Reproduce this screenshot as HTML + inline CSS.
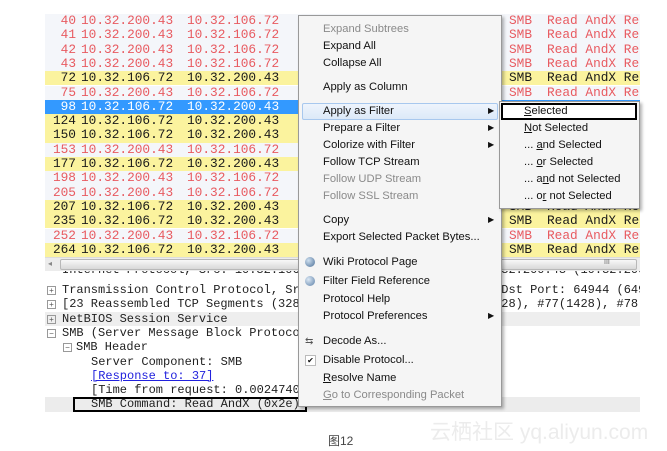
<!DOCTYPE html>
<html><head><meta charset="utf-8"><style>
body{margin:0;width:667px;height:451px;background:#fff;position:relative;overflow:hidden;font-family:"Liberation Mono",monospace}
.r{position:absolute;left:45px;width:595px;height:14.3px;font-size:12.8px;line-height:14.3px;white-space:pre;overflow:hidden}
.req{background:#f4f6fa;color:#e85a60}
.res{background:#fbf39e;color:#1a1a1a}
.sel{background:#3399ff;color:#fff}
.r span{position:absolute;top:0}
.n{left:0;width:31px;text-align:right}
.s{left:36px}.d{left:142px}.p{left:464px}.i{left:502px}
.dt{position:absolute;left:45px;width:595px;height:14.3px;font-size:12px;line-height:14.3px;white-space:pre;color:#222;overflow:hidden}
.dt b{font-weight:normal;position:absolute;top:0}
.pl{position:absolute;left:2px;top:3px;width:7px;height:7px;border:1px solid #999;font-size:8px;line-height:7px;text-align:center;color:#555;font-family:"Liberation Sans",sans-serif}
.menu{position:absolute;left:298px;top:15px;width:202px;height:390px;background:#f5f5f5;border:1px solid #999;box-shadow:2px 2px 3px rgba(0,0,0,.3);font-family:"Liberation Sans",sans-serif;font-size:11.2px;color:#111}
.mi{position:absolute;left:24px;white-space:nowrap}
.g{color:#8a8a8a}
.ar{position:absolute;left:189px;font-size:8px}
.sub{position:absolute;left:499px;top:101px;width:139px;height:106px;background:#f5f5f5;border:1px solid #999;box-shadow:2px 2px 3px rgba(0,0,0,.3);font-family:"Liberation Sans",sans-serif;font-size:11.2px;color:#111}
.si{position:absolute;left:24px;white-space:nowrap}
</style></head><body>

<div class="r req" style="top:14px"><span class="n">40</span><span class="s">10.32.200.43</span><span class="d">10.32.106.72</span><span class="p">SMB</span><span class="i">Read AndX Req</span></div>
<div class="r req" style="top:28.3px"><span class="n">41</span><span class="s">10.32.200.43</span><span class="d">10.32.106.72</span><span class="p">SMB</span><span class="i">Read AndX Req</span></div>
<div class="r req" style="top:42.6px"><span class="n">42</span><span class="s">10.32.200.43</span><span class="d">10.32.106.72</span><span class="p">SMB</span><span class="i">Read AndX Req</span></div>
<div class="r req" style="top:56.9px"><span class="n">43</span><span class="s">10.32.200.43</span><span class="d">10.32.106.72</span><span class="p">SMB</span><span class="i">Read AndX Req</span></div>
<div class="r res" style="top:71.2px"><span class="n">72</span><span class="s">10.32.106.72</span><span class="d">10.32.200.43</span><span class="p">SMB</span><span class="i">Read AndX Res</span></div>
<div class="r req" style="top:85.5px"><span class="n">75</span><span class="s">10.32.200.43</span><span class="d">10.32.106.72</span><span class="p">SMB</span><span class="i">Read AndX Req</span></div>
<div class="r sel" style="top:99.8px"><span class="n">98</span><span class="s">10.32.106.72</span><span class="d">10.32.200.43</span></div>
<div class="r res" style="top:114.1px"><span class="n">124</span><span class="s">10.32.106.72</span><span class="d">10.32.200.43</span></div>
<div class="r res" style="top:128.4px"><span class="n">150</span><span class="s">10.32.106.72</span><span class="d">10.32.200.43</span></div>
<div class="r req" style="top:142.7px"><span class="n">153</span><span class="s">10.32.200.43</span><span class="d">10.32.106.72</span></div>
<div class="r res" style="top:157px"><span class="n">177</span><span class="s">10.32.106.72</span><span class="d">10.32.200.43</span></div>
<div class="r req" style="top:171.3px"><span class="n">198</span><span class="s">10.32.200.43</span><span class="d">10.32.106.72</span></div>
<div class="r req" style="top:185.6px"><span class="n">205</span><span class="s">10.32.200.43</span><span class="d">10.32.106.72</span></div>
<div class="r res" style="top:199.9px"><span class="n">207</span><span class="s">10.32.106.72</span><span class="d">10.32.200.43</span><span class="p">SMB</span><span class="i">Read AndX Res</span></div>
<div class="r res" style="top:214.2px"><span class="n">235</span><span class="s">10.32.106.72</span><span class="d">10.32.200.43</span><span class="p">SMB</span><span class="i">Read AndX Res</span></div>
<div class="r req" style="top:228.5px"><span class="n">252</span><span class="s">10.32.200.43</span><span class="d">10.32.106.72</span><span class="p">SMB</span><span class="i">Read AndX Req</span></div>
<div class="r res" style="top:242.8px"><span class="n">264</span><span class="s">10.32.106.72</span><span class="d">10.32.200.43</span><span class="p">SMB</span><span class="i">Read AndX Res</span></div>

<div style="position:absolute;left:45px;top:257px;width:595px;height:13px;background:#ececec;border-top:1px solid #ddd"></div>
<div style="position:absolute;left:48px;top:259px;font-size:8px;color:#888;font-family:'Liberation Sans',sans-serif">◂</div>
<div style="position:absolute;left:60px;top:259px;width:575px;height:9px;background:linear-gradient(#f8f8f8,#d8d8d8);border:1px solid #b8b8b8;border-radius:2px"></div>
<div style="position:absolute;left:604px;top:259px;font-size:7px;color:#666;font-family:'Liberation Sans',sans-serif">III</div>

<div style="position:absolute;left:45px;top:271px;width:595px;height:6px;overflow:hidden"><div class="dt" style="left:0;top:-8px"><b style="left:17px">Internet Protocol, Src: 10.32.106.72 (10.32.106.72), Dst: 10.32.200.43 (10.32.200.43)</b></div></div>
<div class="dt" style="top:283px"><div class="pl">+</div><b style="left:17px">Transmission Control Protocol, Src Port: microsoft-ds (445), Dst Port: 64944 (64944)</b></div>
<div class="dt" style="top:297.3px"><div class="pl">+</div><b style="left:17px">[23 Reassembled TCP Segments (32839 bytes): #72(1428), #76(1428), #77(1428), #78(</b></div>
<div class="dt" style="top:311.6px;background:#eee"><div class="pl">+</div><b style="left:17px">NetBIOS Session Service</b></div>
<div class="dt" style="top:325.9px"><div class="pl">−</div><b style="left:17px">SMB (Server Message Block Protocol)</b></div>
<div class="dt" style="top:340.2px"><div class="pl" style="left:18px">−</div><b style="left:31px">SMB Header</b></div>
<div class="dt" style="top:354.5px"><b style="left:46px">Server Component: SMB</b></div>
<div class="dt" style="top:368.8px"><b style="left:46px;color:#2222dd;text-decoration:underline">[Response to: 37]</b></div>
<div class="dt" style="top:383.1px"><b style="left:46px">[Time from request: 0.002474000 seconds]</b></div>
<div class="dt" style="top:397.4px;background:#ececec"><b style="left:46px">SMB Command: Read AndX (0x2e)</b></div>
<div style="position:absolute;left:73px;top:397px;width:234px;height:15px;border:2px solid #000;box-sizing:border-box"></div>

<div class="menu">
<div class="mi g" style="top:7px">Expand Subtrees</div>
<div class="mi" style="top:24px">Expand All</div>
<div class="mi" style="top:41px">Collapse All</div>
<div class="mi" style="top:65px">Apply as Column</div>
<div style="position:absolute;left:3px;top:87px;width:196px;height:17px;background:linear-gradient(#eef4fc,#dce9f8);border:1px solid #a8c8ee;border-radius:2px;box-sizing:border-box"></div>
<div class="mi" style="top:89px">Apply as Filter</div><div class="ar" style="top:90px">▶</div>
<div class="mi" style="top:106px">Prepare a Filter</div><div class="ar" style="top:107px">▶</div>
<div class="mi" style="top:123px">Colorize with Filter</div><div class="ar" style="top:124px">▶</div>
<div class="mi" style="top:140px">Follow TCP Stream</div>
<div class="mi g" style="top:157px">Follow UDP Stream</div>
<div class="mi g" style="top:174px">Follow SSL Stream</div>
<div class="mi" style="top:198px">Copy</div><div class="ar" style="top:199px">▶</div>
<div class="mi" style="top:215px">Export Selected Packet Bytes...</div>
<div style="position:absolute;left:6px;top:241px;width:10px;height:10px;border-radius:50%;background:radial-gradient(circle at 35% 35%,#cfe0f0,#4a6e96)"></div>
<div class="mi" style="top:240px">Wiki Protocol Page</div>
<div style="position:absolute;left:6px;top:260px;width:10px;height:10px;border-radius:50%;background:radial-gradient(circle at 35% 35%,#dde9f5,#5a7ea6)"></div>
<div class="mi" style="top:259px">Filter Field Reference</div>
<div class="mi" style="top:277px">Protocol Help</div>
<div class="mi" style="top:294px">Protocol Preferences</div><div class="ar" style="top:295px">▶</div>
<div style="position:absolute;left:6px;top:320px;font-size:10px;color:#555">⇆</div>
<div class="mi" style="top:319px">Decode As...</div>
<div style="position:absolute;left:6px;top:339px;width:9px;height:9px;border:1px solid #bbb;background:#fff;font-size:8px;line-height:9px;text-align:center">✔</div>
<div class="mi" style="top:338px">Disable Protocol...</div>
<div class="mi" style="top:356px"><u>R</u>esolve Name</div>
<div class="mi g" style="top:373px"><u>G</u>o to Corresponding Packet</div>
</div>

<div class="sub">
<div style="position:absolute;left:1px;top:1px;width:136px;height:17px;border:2px solid #000;box-sizing:border-box;background:#fff"></div>
<div class="si" style="top:3px"><u>S</u>elected</div>
<div class="si" style="top:20px"><u>N</u>ot Selected</div>
<div class="si" style="top:37px">... <u>a</u>nd Selected</div>
<div class="si" style="top:54px">... <u>o</u>r Selected</div>
<div class="si" style="top:71px">... a<u>n</u>d not Selected</div>
<div class="si" style="top:88px">... o<u>r</u> not Selected</div>
</div>

<div style="position:absolute;left:430px;top:416px;font-family:'Liberation Sans','Noto Sans CJK SC',sans-serif;font-size:21px;color:#ececec;white-space:nowrap">云栖社区 yq.aliyun.com</div>
<div style="position:absolute;left:328px;top:432px;font-family:'Liberation Sans','Noto Sans CJK SC',sans-serif;font-size:12px;color:#444">图12</div>
</body></html>
